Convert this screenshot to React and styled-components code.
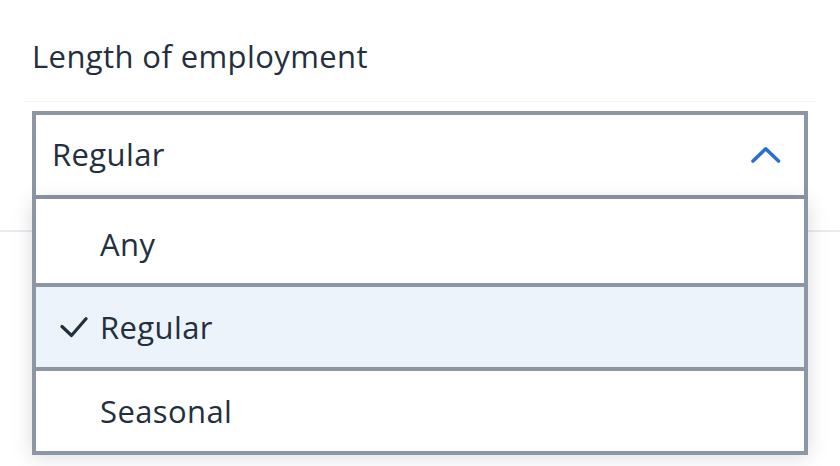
import React from "react";
import styled, { createGlobalStyle } from "styled-components";

const GlobalStyle = createGlobalStyle`
  html, body {
    margin: 0;
    padding: 0;
    background: #ffffff;
  }
  body {
    font-family: "Open Sans", "Noto Sans", Arial, sans-serif;
    color: #232f3e;
  }
`;

const options = [
  { label: "Any", height: 84, offset: 7 },
  { label: "Regular", height: 76, offset: 0 },
  { label: "Seasonal", height: 80, offset: 0 },
];

const selected = "Regular";

const App = () => {
  return (
    <>
      <GlobalStyle />
      <Page>
        <Header>
          <Label>Length of employment</Label>
        </Header>
        <Field>
          <SelectWrap>
            <Trigger>
              <Value>{selected}</Value>
              <svg width="30" height="18" viewBox="0 0 30 18">
                <polyline
                  points="2,15 14.7,2.8 27.5,15"
                  fill="none"
                  stroke="#2c6ecf"
                  strokeWidth="3.6"
                  strokeLinecap="round"
                  strokeLinejoin="round"
                />
              </svg>
            </Trigger>
            <Menu>
              {options.map((opt) => (
                <Option
                  key={opt.label}
                  $height={opt.height}
                  $offset={opt.offset}
                  $selected={opt.label === selected}
                >
                  <Check>
                    {opt.label === selected && (
                      <svg width="28" height="22" viewBox="0 0 28 22">
                        <polyline
                          points="2,9.5 11.5,18.5 26,1.8"
                          fill="none"
                          stroke="#232f3e"
                          strokeWidth="3.2"
                          strokeLinecap="round"
                          strokeLinejoin="round"
                        />
                      </svg>
                    )}
                  </Check>
                  {opt.label}
                </Option>
              ))}
            </Menu>
          </SelectWrap>
        </Field>
      </Page>
    </>
  );
};

export default App;

const Page = styled.div`
  width: 840px;
  height: 466px;
  overflow: hidden;
`;

const Header = styled.div`
  margin: 0 24px;
  height: 102px;
  border-bottom: 1px solid #f3f3f5;
  padding-left: 8px;
  box-sizing: border-box;
`;

const Label = styled.div`
  font-size: 31px;
  font-weight: 500;
  line-height: 1;
  padding-top: 41px;
  letter-spacing: 0.4px;
`;

const Field = styled.div`
  padding: 9px 32px 31px;
  border-bottom: 2px solid #e9ebef;
`;

const SelectWrap = styled.div`
  position: relative;
`;

const Trigger = styled.div`
  height: 88px;
  box-sizing: border-box;
  border: 4px solid #8d96a4;
  display: flex;
  align-items: center;
  justify-content: space-between;
  padding: 0 23px 0 16px;
  background: #fff;
`;

const Value = styled.span`
  font-size: 31px;
  font-weight: 500;
  letter-spacing: 0.4px;
  line-height: 1;
  margin-top: -2px;
`;

const Menu = styled.div`
  position: absolute;
  top: 100%;
  left: 0;
  right: 0;
  z-index: 2;
  background: #fff;
  border: 4px solid #8d96a4;
  border-top: none;
  box-shadow: 0 2px 20px rgba(0, 16, 40, 0.14);
`;

const Option = styled.div`
  height: ${(p) => p.$height}px;
  box-sizing: border-box;
  padding-top: ${(p) => p.$offset}px;
  display: flex;
  align-items: center;
  font-size: 31px;
  font-weight: 500;
  letter-spacing: 0.4px;
  line-height: 1;
  background: ${(p) => (p.$selected ? "#ecf3fb" : "#fff")};
  & + & {
    border-top: 4px solid #8d96a4;
    height: ${(p) => p.$height + 4}px;
  }
`;

const Check = styled.span`
  width: 64px;
  display: flex;
  justify-content: flex-end;
  padding-right: 12px;
  box-sizing: border-box;
  margin-top: 2px;
`;
